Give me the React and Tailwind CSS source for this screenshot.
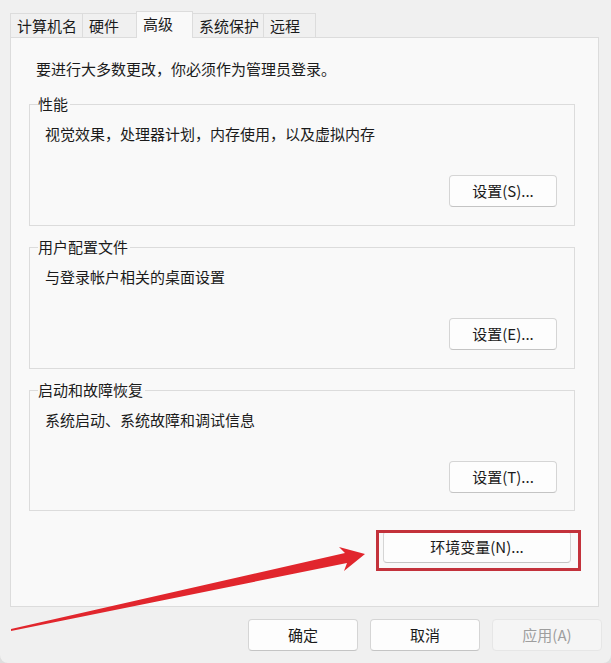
import React from 'react';

const tabs = [
  { label: '计算机名', w: 'w-[73px]' },
  { label: '硬件', w: 'w-[55px]' },
  { label: '高级', w: 'w-[57px]', active: true },
  { label: '系统保护', w: 'w-[72px]' },
  { label: '远程', w: 'w-[53px]' },
];

const groups = [
  { title: '性能', desc: '视觉效果，处理器计划，内存使用，以及虚拟内存', btn: '设置(S)...', h: 'h-[122px]' },
  { title: '用户配置文件', desc: '与登录帐户相关的桌面设置', btn: '设置(E)...', h: 'h-[122px]' },
  { title: '启动和故障恢复', desc: '系统启动、系统故障和调试信息', btn: '设置(T)...', h: 'h-[121px]' },
];

function Button({ children, className = '', disabled }) {
  return (
    <button
      className={`h-[32px] rounded-[4px] border text-[15px] leading-[20px] ${
        disabled
          ? 'bg-[#f5f5f5] border-[#e6e6e6] text-[#9e9e9e]'
          : 'bg-[#fdfdfd] border-[#d5d5d5] border-b-[#c4c4c4] text-[#1b1b1b]'
      } ${className}`}
    >
      {children}
    </button>
  );
}

function GroupBox({ title, desc, btn, h }) {
  return (
    <div className={`relative ml-[18px] w-[546px] ${h} border border-[#dcdcdc] flex flex-col`}>
      <span className="absolute left-[8px] -top-[11px] bg-[#f9f9f9] pr-[2px] text-[15px] leading-[20px]">
        {title}
      </span>
      <p className="pl-[15px] pt-[19px] text-[15px] leading-[20px]">{desc}</p>
      <div className="flex justify-end pr-[17px] mt-[31px]">
        <Button className="w-[108px]">{btn}</Button>
      </div>
    </div>
  );
}

export default function App() {
  return (
    <div
      className="w-[611px] h-[663px] bg-[#dedede] text-[#1b1b1b]"
      style={{ fontFamily: '"Noto Sans CJK SC", "Noto Sans", sans-serif' }}
    >
      <div className="relative w-full h-full bg-[#f0f0f0] rounded-b-[8px] overflow-hidden">
        <div className="pt-[11px] pl-[10px] pr-[12px]">
          {/* tab strip */}
          <div className="relative z-10 flex items-end h-[26px]">
            {tabs.map((t, i) => (
              <div
                key={t.label}
                className={`${t.w} shrink-0 whitespace-nowrap ${i > 0 ? '-ml-px' : ''} border-l border-t border-r border-[#dcdcdc] pl-[6px] text-[15px] leading-[20px] flex items-center ${
                  t.active
                    ? 'h-[27px] -mb-px bg-[#f9f9f9] pb-[2px] relative z-10'
                    : 'h-[24px] bg-[#f0f0f0]'
                }`}
              >
                {t.label}
              </div>
            ))}
          </div>

          {/* panel */}
          <div className="h-[570px] border border-[#dcdcdc] bg-[#f9f9f9]">
            <p className="pl-[25px] pt-[21px] text-[15px] leading-[20px]">
              要进行大多数更改，你必须作为管理员登录。
            </p>
            <div className="mt-[25px] flex flex-col gap-[21px]">
              {groups.map((g) => (
                <GroupBox key={g.title} {...g} />
              ))}
            </div>
            <div className="flex justify-end pr-[27px] mt-[20px]">
              <Button className="w-[188px]">环境变量(N)...</Button>
            </div>
          </div>
        </div>

        {/* dialog buttons */}
        <div className="flex justify-end gap-[12px] pr-[9px] mt-[12px]">
          <Button className="w-[110px]">确定</Button>
          <Button className="w-[110px]">取消</Button>
          <Button className="w-[110px]" disabled>应用(A)</Button>
        </div>

        {/* annotation: red box */}
        <div className="absolute left-[376px] top-[530px] w-[205px] h-[41px] border-[3px] border-[#c3323b] pointer-events-none" />

        {/* annotation: arrow */}
        <svg className="absolute inset-0 pointer-events-none" width="611" height="663" viewBox="0 0 611 663">
          <polygon
            fill="#e1262d"
            points="11,629 345,553 339,547 365,554 344,571 347,563 11,631"
          />
        </svg>
      </div>
    </div>
  );
}
